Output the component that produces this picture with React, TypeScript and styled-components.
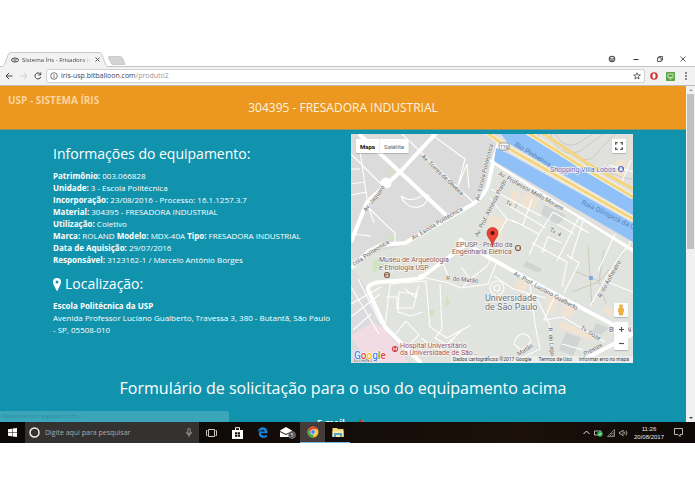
import React from "react";
import styled, { createGlobalStyle, css } from "styled-components";

const GlobalStyle = createGlobalStyle`
  * { box-sizing: border-box; }
  body { margin: 0; background: #fff; font-family: "Open Sans", sans-serif; }
  button, input { font-family: inherit; }
  svg { flex: none; }
`;

const Desktop = styled.div`
  display: flex;
  flex-direction: column;
  height: 100vh;
  padding: 52px 0 51px;
  overflow: hidden;
`;

/* ---------- browser ---------- */

const TabStrip = styled.div`
  display: flex;
  align-items: flex-end;
  height: 15px;
  flex: none;
  border-bottom: 1px solid #c4c4c4;
`;

const TabShape = styled.svg`
  position: absolute;
  inset: 0;
  width: 100%;
  height: 100%;
`;

const Tab = styled.div`
  position: relative;
  display: flex;
  align-items: center;
  gap: 3px;
  width: 106px;
  height: 15px;
  margin: 0 0 -1px 2px;
  padding: 0 8px 0 9px;
  color: #444;
`;

const TabIcon = styled.svg`
  position: relative;
`;

const TabTitle = styled.span`
  position: relative;
  flex: 1;
  font-size: 6px;
  line-height: 12px;
  white-space: nowrap;
  overflow: hidden;
  mask-image: linear-gradient(90deg, #000 85%, transparent);
`;

const IconButton = styled.button<{ $w?: number }>`
  position: relative;
  display: flex;
  align-items: center;
  justify-content: center;
  flex: none;
  width: ${(p) => p.$w ?? 12}px;
  height: 12px;
  padding: 0;
  border: 0;
  background: none;
  color: #555;
`;

const WindowButtons = styled.div`
  display: flex;
  align-items: center;
  gap: 12px;
  margin-left: auto;
  padding: 0 7px 1px 0;
`;

const Toolbar = styled.div`
  display: flex;
  align-items: center;
  height: 19px;
  flex: none;
  padding: 0 3px;
  gap: 3px;
  background: #f2f2f2;
  border-bottom: 1px solid #c0bdb6;
`;

const AddressBar = styled.div`
  display: flex;
  align-items: center;
  flex: 1;
  height: 14px;
  gap: 3px;
  padding: 0 1px 0 3px;
  background: #fff;
  border: 1px solid #d0d0d0;
  border-radius: 2px;
`;

const Address = styled.div`
  flex: 1;
  font-size: 7px;
  line-height: 12px;
  color: #444;
  span { color: #999; }
`;

/* ---------- page ---------- */

const Viewport = styled.div`
  position: relative;
  display: flex;
  flex: 1;
  min-height: 0;
  overflow: hidden;
`;

const Page = styled.div`
  flex: 1;
  min-width: 0;
  background: #1193ad;
  color: #fff;
`;

const Header = styled.header`
  display: grid;
  grid-template-columns: 1fr auto 1fr;
  align-items: center;
  height: 44px;
  padding: 0 8px;
  background: #ec9720;
  border-bottom: 1px solid #8f9560;
`;

const Brand = styled.a`
  align-self: start;
  padding-top: 7px;
  font-size: 10px;
  line-height: 14px;
  font-weight: 700;
  color: #fbd59b;
  text-decoration: none;
  white-space: nowrap;
`;

const ProductTitle = styled.h1`
  margin: 0;
  font-size: 12px;
  line-height: 18px;
  font-weight: 400;
  color: #fff3df;
`;

const Columns = styled.main`
  display: grid;
  grid-template-columns: 1fr 1fr;
  gap: 16px;
  padding: 4px 53px 0;
`;

const Info = styled.section`
  padding-top: 10px;
`;

const Heading = styled.h2`
  display: flex;
  align-items: center;
  gap: 4px;
  margin: 0 0 6px;
  font-size: 14px;
  line-height: 20px;
  font-weight: 400;
`;

const Details = styled.p`
  margin: 0 0 8px;
  font-size: 8px;
  line-height: 12px;
`;

const NoBreak = styled.span`
  white-space: nowrap;
`;

const FormTitle = styled.h2`
  margin: 13px 0 17px;
  font-size: 16px;
  line-height: 24px;
  font-weight: 400;
  text-align: center;
`;

const FieldLabel = styled.div`
  display: flex;
  gap: 14px;
  padding-left: 317px;
  font-size: 9px;
  line-height: 12px;
  font-weight: 700;
  span { color: #e0303a; }
`;

const ScrollTrack = styled.div`
  display: flex;
  flex-direction: column;
  align-items: center;
  width: 9px;
  flex: none;
  background: #f1f1f1;
`;

const ScrollArrow = styled.svg`
  width: 8px;
  height: 8px;
  flex: none;
  &:last-child { margin-top: auto; }
`;

const ScrollThumb = styled.div`
  width: 7px;
  height: 46%;
  background: #c1c1c1;
`;

const StatusBubble = styled.div`
  position: absolute;
  left: 0;
  bottom: 0;
  width: 33%;
  height: 11px;
  padding-left: 2px;
  font-size: 6px;
  line-height: 10px;
  color: #2a8ea3;
  background: #3ba5b9;
  border-radius: 0 2px 0 0;
`;

/* ---------- map ---------- */

const MapFrame = styled.section`
  position: relative;
  aspect-ratio: 282 / 229;
  overflow: hidden;
  font-family: Roboto, sans-serif;
  background: #dfe0dd;
`;

const MapCanvas = styled.svg`
  display: block;
  width: 100%;
  height: 100%;
`;

const floating = css`
  position: absolute;
  display: flex;
  background: #fff;
  border-radius: 1px;
  box-shadow: 0 1px 1px rgba(0, 0, 0, 0.2);
`;

const MapTypes = styled.div`
  ${floating}
  left: 5px;
  top: 5px;
  height: 14px;
`;

const MapType = styled.button<{ $active?: boolean }>`
  padding: 0 4px;
  border: 0;
  border-right: 1px solid #eee;
  background: none;
  font-size: 6px;
  font-weight: ${(p) => (p.$active ? 700 : 400)};
  color: ${(p) => (p.$active ? "#111" : "#666")};
`;

const MapButton = styled.button`
  ${floating}
  right: 5px;
  align-items: center;
  justify-content: center;
  width: 14px;
  height: 14px;
  padding: 0;
  border: 0;
`;

const Fullscreen = styled(MapButton)`
  right: 7px;
  top: 5px;
`;
const Pegman = styled(MapButton)`bottom: 46px;`;
const ZoomIn = styled(MapButton)`bottom: 27px;`;
const ZoomOut = styled(MapButton)`bottom: 13px;`;

const Attribution = styled.div`
  position: absolute;
  right: 0;
  bottom: 0;
  display: flex;
  gap: 7px;
  padding: 0 4px 0 2px;
  font-size: 5px;
  line-height: 7px;
  color: #444;
  background: rgba(240, 240, 240, 0.75);
  white-space: nowrap;
  a { color: inherit; text-decoration: none; }
`;

/* ---------- taskbar ---------- */

const Taskbar = styled.footer`
  display: flex;
  align-items: stretch;
  height: 21px;
  flex: none;
  background: linear-gradient(90deg, #0c0807, #150d08 55%, #1b110a 75%, #0d0807);
`;

const TaskButton = styled.button<{ $w?: number; $open?: boolean; $active?: boolean }>`
  display: flex;
  align-items: center;
  justify-content: center;
  width: ${(p) => p.$w ?? 25}px;
  padding: 0;
  border: 0;
  border-bottom: ${(p) => (p.$open ? "1px solid #76b9ed" : "0")};
  background: ${(p) => (p.$active ? "#453c39" : "none")};
`;

const Search = styled.label`
  display: flex;
  align-items: center;
  gap: 5px;
  width: 174px;
  padding: 0 7px 0 4px;
  background: #343231;
`;

const SearchInput = styled.input`
  flex: 1;
  min-width: 0;
  padding: 0;
  border: 0;
  outline: 0;
  background: none;
  font-size: 7px;
  color: #aaa;
  &::placeholder { color: #aaa; opacity: 1; }
`;

const Tray = styled.div`
  display: flex;
  align-items: center;
  gap: 4px;
  margin-left: auto;
  padding-right: 12px;
`;

const Clock = styled.time`
  width: 34px;
  margin-right: 4px;
  font-size: 6px;
  line-height: 8px;
  text-align: center;
  color: #e8e8e8;
  font-family: "Liberation Sans", sans-serif;
`;

const details: [string, string][][] = [
  [["Patrimônio:", "003.066828"]],
  [["Unidade:", "3 - Escola Politécnica"]],
  [["Incorporação:", "23/08/2016 - Processo: 16.1.1257.3.7"]],
  [["Material:", "304395 - FRESADORA INDUSTRIAL"]],
  [["Utilização:", "Coletivo"]],
  [["Marca:", "ROLAND"], ["Modelo:", "MDX-40A"], ["Tipo:", "FRESADORA INDUSTRIAL"]],
  [["Data de Aquisição:", "29/07/2016"]],
  [["Responsável:", "3123162-1 / Marcelo Antônio Borges"]],
];

const streets: [string, number, number, number][] = [
  ["Av. Jaguaré", 15, 78, -52],
  ["Av. Torres de Oliveira", 70, 23, 44],
  ["Av. Escola Politécnica", 62, 106, -31],
  ["Av. Escola Politécnica", 128, 67, -76],
  ["cola Politécnica", 3, 132, -33],
  ["Av. Prof. Almeida Prado", 127, 103, -63],
  ["Av. Professor Mello Moraes", 147, 41, 29],
  ["Tv. 1", 154, 70, 24],
  ["Tv. 4", 198, 97, 28],
  ["R. do Matão", 95, 146, 5],
  ["Av. Prof. Luciano Gualberto", 162, 141, 29],
  ["R. do Anfiteatro", 250, 164, -61],
  ["Tv. Doze", 229, 195, 31],
  ["R. do Lago", 197, 194, 84],
  ["Prestes", 234, 222, -29],
  ["Matão", 168, 222, -33],
];

const Map = () => (
  <MapFrame aria-label="Mapa">
    <MapCanvas viewBox="0 0 282 229" preserveAspectRatio="xMidYMid slice">
      <rect width="282" height="229" fill="#e1e3de" />
      <path d="M0 0H149L138 52 118 73 54 111 0 125Z" fill="#dbdbdb" />
      <path d="M0 133 16 154 34 193 60 229H0Z" fill="#dcdcdf" />
      <path d="M0 202 22 188 34 195 58 229H18Z" fill="#f1dce3" />
      <path d="M149 0H282V112L139 27Z" fill="#e0e0dd" />
      <path d="M33 36 40 30 48 40 40 46Z M112 35 118 27 113 53Z" fill="#d9dcd0" />
      <g fill="#cfe3bf">
        <path d="M23 126 38 122 32 134 22 138Z M78 176H83V182H78Z M96 161 99 170 94 172Z M36 101 48 103 42 107Z" />
      </g>
      <g fill="#f1e3d1">
        <path d="M163 55 170 59 163 73 157 69Z M173 59 188 64 183 76 168 72Z M137 80 154 85 150 108 138 102Z M166 145 177 150 173 158 163 153Z M198 161 208 167 201 181 194 177Z M213 170 225 176 218 184 210 181Z M210 187 244 202 240 207 207 193Z M266 25 278 27 270 47 262 41Z M255 172 267 177 263 183 252 178Z" />
      </g>
      <path d="M193 71 215 81 207 91 190 80Z M175 127 191 135 188 139 172 132Z M215 198 230 204 222 222 208 216Z M245 189 258 194 250 201 241 198Z" fill="#d2d4d4" />
      <g fill="none" stroke="#c8cac8" strokeWidth="1">
        <path d="M187 0C194 18 211 20 214 27C225 37 236 27 246 36C259 37 267 44 282 45M205 0C210 12 222 14 230 7L242 0M200 0C204 20 222 23 232 15L252 0M222 17C228 28 240 28 245 20L264 0" />
      </g>
      <g fill="none" stroke="#bfc2a8" strokeWidth=".7">
        <path d="M223 137 248 147 273 119M237 113 241 170M253 116 248 147 255 170M221 158 247 148" />
      </g>
      <g fill="none" stroke="#fff" strokeWidth="1.1">
        <path d="M0 20 30 50M8 10 16 65M0 35H9M0 50 14 48M0 61 16 58M51 0 122 68M80 0 114 25 107 52 116 30 118 54M50 62C66 73 72 55 78 62C72 80 54 74 50 62M16 72 30 86 44 99V109M16 68 23 89M0 100 20 102" />
        <path d="M0 170 30 153M0 183 29 160M7 145 30 190M0 153 28 200M20 180 2 196M39 150 34 193M39 150 75 147 79 193 96 204 120 191M35 163H46V174H62L66 160 48 158 47 178 60 182 72 178M54 155 64 163 68 152M43 202 55 187 68 201 56 213ZM70 204 89 217 110 197M89 150 91 195 84 204 98 212M99 205 120 229M71 143 98 149 110 154 137 150 145 130M112 153C121 140 139 135 139 125M110 133 119 145M92 130 99 146" />
        <path d="M139 64 156 85 137 118M156 85 172 91 181 65M155 70 195 94M161 86 188 100 178 121M188 100 202 78M202 78 238 99M228 83 206 127M206 90 223 100M181 109 216 128 211 153M191 119 197 103 211 109M220 125 232 87M239 90 282 118M264 100 247 137M140 55 190 82M216 121 228 129 213 159M239 172 262 132 281 106M259 149 282 158M205 160 193 186 212 183 254 208M175 160 185 163 198 189 203 229M163 210C166 196 179 198 180 208L170 216ZM179 150 184 190 189 215 160 229M143 142 162 155 195 164M258 31 282 38M270 50 280 26M211 210 232 216" />
        <circle cx="146" cy="154" r="7" />
        <circle cx="146" cy="154" r="3" />
      </g>
      <g fill="none" stroke="#fff" strokeWidth="4" strokeLinejoin="round">
        <path d="M88-4 49 38 16 68 0 108M8 0 49 38 97 83" />
        <path d="M0 134 18 117 30 111 54 109 122 70Q136 60 138 47L142 28 148 8" />
        <path d="M114 111 71 143 66 145 31 148Q16 149 17 156L34 193 70 229M108 105 139 124 206 161 259 189 282 200 226 229" />
      </g>
      <circle cx="35" cy="49" r="5.5" fill="#fff" />
      <circle cx="70" cy="143" r="3" fill="#fff" />
      <path d="M150 0H174L282 65V81L157 9ZM145 14 143 27 282 108V89L158 20Z" fill="#8fc0f7" />
      <path d="M138 26 212 73 282 116" fill="none" stroke="#fff" strokeWidth="2.5" />
      <g fill="none" strokeLinejoin="round">
        <path d="M131-5 157 14 282 85M176-2 225 29 282 63" stroke="#f5f3e8" strokeWidth="5" />
        <path d="M131-5 157 14 282 85M176-2 225 29 282 63M190-2 239 31 282 55" stroke="#f5d57c" strokeWidth="3" />
      </g>
      <rect x="148" y="9" width="10" height="7" rx="2" fill="#fff" stroke="#777" strokeWidth=".7" />
      <g fontSize="5" fill="#555" fontFamily="Roboto, sans-serif">
        <text x="149" y="15">116</text>
      </g>
      <g fontSize="6" fill="#666" stroke="#f4f4f2" strokeWidth="1" paintOrder="stroke" fontFamily="Roboto, sans-serif">
        {streets.map(([name, x, y, angle], i) => (
          <text key={i} x={x} y={y} transform={`rotate(${angle} ${x} ${y})`}>{name}</text>
        ))}
      </g>
      <g fontSize="7" fill="#5587b8" fontFamily="Roboto, sans-serif">
        <text x="163" y="12" transform="rotate(31 163 12)">Rio Pinheiros</text>
        <text x="230" y="70" transform="rotate(26 230 70)">Raia Olímpica da US</text>
      </g>
      <g fontSize="7" stroke="#f7f7f5" strokeWidth="1.4" paintOrder="stroke" fontFamily="Roboto, sans-serif">
        <text x="199" y="38" fill="#5868b8">Shopping Villa Lobos</text>
        <g fill="#8a5b50">
          <text x="105" y="113">EPUSP - Prédio da</text>
          <text x="101" y="120">Engenharia Elétrica</text>
          <text x="28" y="128">Museu de Arqueologia</text>
          <text x="28" y="136">e Etnologia USP</text>
          <text x="258" y="198">BUTAN</text>
        </g>
        <g fill="#a4525a">
          <text x="49" y="214">Hospital Universitário</text>
          <text x="49" y="221">da Universidade de São…</text>
        </g>
        <g fontSize="9" fill="#6c7074">
          <text x="134" y="167">Universidade</text>
          <text x="134" y="176">de São Paulo</text>
        </g>
      </g>
      <circle cx="270" cy="35" r="3" fill="#5868c0" />
      <path d="M268.7 34.5H271.3V36.5H268.7ZM269.3 34V33.3H270.7V34" fill="#fff" stroke="#fff" strokeWidth=".4" />
      <g fill="#e9dccf" stroke="#86604f" strokeWidth="1.2">
        <circle cx="167" cy="114" r="2.5" />
        <circle cx="36" cy="141" r="2.5" />
      </g>
      <path d="M34.8 142V140.5H37.2V142" fill="none" stroke="#86604f" strokeWidth=".7" />
      <circle cx="44" cy="215" r="3" fill="#d3393f" />
      <path d="M42.7 213.5V216.5M45.3 213.5V216.5M42.7 215H45.3" stroke="#fff" strokeWidth=".8" />
      <rect x="238" y="142" width="4" height="4" rx="1" fill="#7ca8e8" />
      <path d="M141.500 113C141 106 136 104 136 99A5.500 5.500 0 0 1 147 99C147 104 142 106 141.500 113Z" fill="#ea4335" stroke="#b3271d" strokeWidth=".6" />
      <circle cx="141.500" cy="99" r="2" fill="#5c100c" />
      <g fontSize="6" fill="#777" fontFamily="Roboto, sans-serif">
        <text x="3" y="228">UTANTÃ</text>
      </g>
      <text x="3" y="225" fontSize="10" fontFamily="Roboto, sans-serif" fontWeight="500" stroke="#fff" strokeWidth="1.2" paintOrder="stroke">
        <tspan fill="#4285f4">G</tspan><tspan fill="#ea4335">o</tspan><tspan fill="#fbbc05">o</tspan><tspan fill="#4285f4">g</tspan><tspan fill="#34a853">l</tspan><tspan fill="#ea4335">e</tspan>
      </text>
    </MapCanvas>
    <MapTypes>
      <MapType $active>Mapa</MapType>
      <MapType>Satélite</MapType>
    </MapTypes>
    <Fullscreen aria-label="Tela cheia">
      <svg width="8" height="8" viewBox="0 0 8 8" fill="none" stroke="#555" strokeWidth="1.3">
        <path d="M.7 2.700V.7H2.700M5.300.7H7.300V2.700M7.300 5.300V7.300H5.300M2.700 7.300H.7V5.300" />
      </svg>
    </Fullscreen>
    <Pegman aria-label="Street View">
      <svg width="8" height="12" viewBox="0 0 8 12" fill="#f0b13a">
        <circle cx="4" cy="2.200" r="2" />
        <path d="M1.500 4.500H6.500V8H5.800V11H2.200V8H1.500Z" stroke="#d3922a" strokeWidth=".5" />
      </svg>
    </Pegman>
    <ZoomIn aria-label="Aumentar zoom">
      <svg width="7" height="7" viewBox="0 0 7 7" stroke="#555" strokeWidth="1.200"><path d="M1 3.500H6M3.500 1V6" /></svg>
    </ZoomIn>
    <ZoomOut aria-label="Diminuir zoom">
      <svg width="7" height="7" viewBox="0 0 7 7" stroke="#555" strokeWidth="1.200"><path d="M1 3.500H6" /></svg>
    </ZoomOut>
    <Attribution>
      <span>Dados cartográficos ©2017 Google</span>
      <a href="#termos">Termos de Uso</a>
      <a href="#erro">Informar erro no mapa</a>
    </Attribution>
  </MapFrame>
);

const Browser = () => (
  <>
    <TabStrip>
      <Tab>
        <TabShape viewBox="0 0 106 15" preserveAspectRatio="none">
          <path d="M0 15Q2 14 3 11L6 3Q7 .5 9 .5H97Q99 .5 100 3L103 11Q104 14 106 15Z" fill="#f2f2f2" stroke="#bbb" strokeWidth=".8" />
          <path d="M1 15H105" stroke="#f2f2f2" strokeWidth="2" />
        </TabShape>
        <TabIcon width="8" height="8" viewBox="0 0 8 8" fill="none" stroke="#444">
          <ellipse cx="4" cy="4" rx="3.500" ry="2" />
          <path d="M2.500 3.500Q4 5.300 5.500 3.500" />
        </TabIcon>
        <TabTitle>Sistema Íris - Frisadora In</TabTitle>
        <IconButton $w={6} aria-label="Fechar guia">
          <svg width="5" height="5" viewBox="0 0 5 5" stroke="currentColor"><path d="M.5.5 4.500 4.500M4.500.5.5 4.500" /></svg>
        </IconButton>
      </Tab>
      <IconButton $w={18} aria-label="Nova guia">
        <svg width="18" height="9" viewBox="0 0 18 9"><path d="M1 .5H12Q14 .5 15 3L17 8.500H5Q3.500 8.500 3 7L.5 2Q0 .5 1 .5Z" fill="#d4d4d4" stroke="#bbb" strokeWidth=".6" /></svg>
      </IconButton>
      <WindowButtons>
        <IconButton aria-label="Perfil">
          <svg width="8" height="8" viewBox="0 0 8 8"><circle cx="4" cy="4" r="3.300" fill="#555" /><path d="M2.500 2H5.500V3.400H2.500ZM1.600 4.400H6.400V5.200H1.600Z" fill="#eee" /></svg>
        </IconButton>
        <IconButton aria-label="Minimizar">
          <svg width="6" height="6" viewBox="0 0 6 6" stroke="#333"><path d="M.5 3.500H5.500" /></svg>
        </IconButton>
        <IconButton aria-label="Restaurar">
          <svg width="6" height="6" viewBox="0 0 6 6" fill="none" stroke="#333" strokeWidth=".8"><path d="M.5 1.800H4.200V5.500H.5ZM1.800 1.800V.5H5.500V4.200H4.200" /></svg>
        </IconButton>
        <IconButton $w={10} aria-label="Fechar">
          <svg width="6" height="6" viewBox="0 0 6 6" stroke="#333" strokeWidth=".8"><path d="M.5.5 5.500 5.500M5.500.5.5 5.500" /></svg>
        </IconButton>
      </WindowButtons>
    </TabStrip>
    <Toolbar>
      <IconButton aria-label="Voltar">
        <svg width="8" height="8" viewBox="0 0 8 8" fill="none" stroke="#444"><path d="M7.500 4H1M4 1 1 4 4 7" /></svg>
      </IconButton>
      <IconButton $w={11} aria-label="Avançar">
        <svg width="8" height="8" viewBox="0 0 8 8" fill="none" stroke="#ccc"><path d="M.5 4H7M4 1 7 4 4 7" /></svg>
      </IconButton>
      <IconButton $w={11} aria-label="Recarregar">
        <svg width="8" height="8" viewBox="0 0 8 8" fill="none" stroke="#444"><path d="M6.800 5A3 3 0 1 1 6.300 2M6.800.5V3H4.300" /></svg>
      </IconButton>
      <AddressBar>
        <svg width="8" height="8" viewBox="0 0 8 8" fill="none" stroke="#555" strokeWidth=".8"><circle cx="4" cy="4" r="3.300" /><path d="M4 3.500V6M4 2V2.800" /></svg>
        <Address>iris-usp.bitballoon.com<span>/produto2</span></Address>
        <IconButton aria-label="Favorito">
          <svg width="8" height="8" viewBox="0 0 8 8" fill="none" stroke="#444" strokeWidth=".8"><path d="M4 .8 4.900 3H7.400L5.400 4.600 6.100 7 4 5.600 1.900 7 2.600 4.600.6 3H3.100Z" /></svg>
        </IconButton>
      </AddressBar>
      <IconButton aria-label="Opera">
        <svg width="8" height="8" viewBox="0 0 8 8"><circle cx="4" cy="4" r="3.800" fill="#d33131" /><ellipse cx="4" cy="4" rx="1.600" ry="2.800" fill="#fff" /></svg>
      </IconButton>
      <IconButton $w={14} aria-label="Extensão">
        <svg width="9" height="9" viewBox="0 0 9 9"><rect width="9" height="9" rx="1" fill="#5aa544" /><path d="M2 2H7V5.500H2ZM3.500 7H5.500M4.500 5.500V7" fill="none" stroke="#dff0d8" strokeWidth=".8" /></svg>
      </IconButton>
      <IconButton aria-label="Menu">
        <svg width="4" height="8" viewBox="0 0 4 8" fill="#555"><circle cx="2" cy="1" r=".9" /><circle cx="2" cy="4" r=".9" /><circle cx="2" cy="7" r=".9" /></svg>
      </IconButton>
    </Toolbar>
  </>
);

const TaskbarItems = () => (
  <Taskbar>
    <TaskButton aria-label="Iniciar">
      <svg width="9" height="9" viewBox="0 0 9 9" fill="#fff"><path d="M0 1.300 4 .7V4.200H0ZM4.500.6 9 0V4.200H4.500ZM0 4.700H4V8.300L0 7.700ZM4.500 4.700H9V9L4.500 8.400Z" /></svg>
    </TaskButton>
    <Search>
      <svg width="11" height="11" viewBox="0 0 11 11" fill="none" stroke="#f2f2f2" strokeWidth="1.500"><circle cx="5.500" cy="5.500" r="4.500" /></svg>
      <SearchInput placeholder="Digite aqui para pesquisar" aria-label="Pesquisar" />
      <svg width="6" height="9" viewBox="0 0 6 9" fill="none" stroke="#aaa" strokeWidth=".8"><rect x="1.800" y=".5" width="2.400" height="5" rx="1.200" /><path d="M.5 4Q.5 6.700 3 6.700T5.500 4M3 6.700V9" /></svg>
    </Search>
    <TaskButton aria-label="Visão de tarefas">
      <svg width="11" height="8" viewBox="0 0 11 8" fill="none" stroke="#ddd" strokeWidth=".9"><path d="M2.500.5H8.500V7.500H2.500ZM1.500 1.500H.5V6.500H1.500M9.500 1.500H10.500V6.500H9.500" /></svg>
    </TaskButton>
    <TaskButton aria-label="Loja" $w={26}>
      <svg width="11" height="12" viewBox="0 0 11 12"><path d="M0 3H11V12H0Z" fill="#fff" /><path d="M3.500 4V.7H7.500V4" fill="none" stroke="#fff" /><path d="M3 5.200H5.200V7.200H3ZM5.800 5.200H8V7.200H5.800ZM3 7.800H5.200V9.800H3ZM5.800 7.800H8V9.800H5.800Z" fill="#1a1210" /></svg>
    </TaskButton>
    <TaskButton aria-label="Edge">
      <svg width="11" height="11" viewBox="0 0 11 11"><path d="M.5 5Q1.500.2 6 .2Q10.700.5 10.600 6.300H4Q4.200 8.600 7 8.700Q8.700 8.700 10 7.900V10.100Q8.500 11 6.300 10.900Q2 10.700 1.800 6.800Q1.900 4.300 4.300 3Q1.800 3.200.5 5ZM4 4.600H7.700Q7.600 2.800 6 2.700Q4.400 2.900 4 4.600Z" fill="#1683d8" fillRule="evenodd" /></svg>
    </TaskButton>
    <TaskButton aria-label="Email">
      <svg width="16" height="13" viewBox="0 0 16 13"><path d="M0 4.500 6 1 12 4.500V11H0Z" fill="#fff" /><path d="M0 5.500 6 8.500 12 5.500" fill="none" stroke="#1a1210" /><circle cx="12" cy="9" r="3.500" fill="#504c4a" stroke="#999" strokeWidth=".6" /><text x="10.500" y="11" fontSize="5" fill="#fff">5</text></svg>
    </TaskButton>
    <TaskButton aria-label="Chrome" $open $active>
      <svg width="12" height="12" viewBox="0 0 12 12"><circle cx="6" cy="6" r="5.500" fill="#f7c928" /><path d="M1.200 3.300A5.500 5.500 0 0 1 10.800 3.300H6L3.700 7.300Z" fill="#e04a3b" /><path d="M1.200 3.300 3.700 7.300 6 8.500 7 8.200 5.500 11.500A5.500 5.500 0 0 1 1.200 3.300Z" fill="#3fa558" /><circle cx="6" cy="6" r="2.600" fill="#fff" /><circle cx="6" cy="6" r="2" fill="#4a86e8" /></svg>
    </TaskButton>
    <TaskButton aria-label="Explorador de Arquivos" $open>
      <svg width="12" height="11" viewBox="0 0 12 11"><path d="M.5 1H5L6 2H11.500V10H.5Z" fill="#f6d978" /><path d="M.5 4H11.500V10H.5Z" fill="#fbe9a4" /><path d="M2 10V6H10V10H8V8H4V10Z" fill="#4fa7cf" /></svg>
    </TaskButton>
    <Tray>
      <svg width="7" height="5" viewBox="0 0 7 5" fill="none" stroke="#ddd"><path d="M.5 4 3.500 1 6.500 4" /></svg>
      <svg width="9" height="8" viewBox="0 0 9 8"><path d="M.5 2H7V6H.5ZM7.500 3.300V4.700" fill="none" stroke="#ddd" strokeWidth=".8" /><circle cx="6" cy="5" r="2.700" fill="#35b557" /><path d="M4.800 5 5.700 6 7.200 4" fill="none" stroke="#fff" strokeWidth=".7" /></svg>
      <svg width="8" height="8" viewBox="0 0 8 8" fill="none" stroke="#999" strokeWidth=".8"><path d="M.5 7.500 7.500.5V7.500ZM3 7.500Q3.500 4.500 7.500 3.500M5 7.500Q5.500 6 7.500 5.500" /></svg>
      <svg width="9" height="8" viewBox="0 0 9 8" fill="none" stroke="#bbb" strokeWidth=".8"><path d="M.5 3H2L4 1V7L2 5H.5ZM5.500 2.800Q6.300 4 5.500 5.200M7 1.500Q8.800 4 7 6.500" /></svg>
      <Clock>11:26<br />20/08/2017</Clock>
      <svg width="9" height="9" viewBox="0 0 9 9" fill="none" stroke="#ccc" strokeWidth=".9"><path d="M.5.5H8.500V6.500H6V8.500L4 6.500H.5Z" /></svg>
    </Tray>
  </Taskbar>
);

export default function App() {
  return (
    <>
      <GlobalStyle />
      <Desktop>
        <Browser />
        <Viewport>
          <Page>
            <Header>
              <Brand href="#inicio">USP - SISTEMA ÍRIS</Brand>
              <ProductTitle>304395 - FRESADORA INDUSTRIAL</ProductTitle>
            </Header>
            <Columns>
              <Info>
                <Heading>Informações do equipamento:</Heading>
                <Details>
                  {details.map((line, i) => (
                    <React.Fragment key={i}>
                      {line.map(([label, value]) => (
                        <React.Fragment key={label}><b>{label}</b> {value} </React.Fragment>
                      ))}
                      <br />
                    </React.Fragment>
                  ))}
                </Details>
                <Heading>
                  <svg width="8" height="13" viewBox="0 0 8 13" fill="#fff"><path fillRule="evenodd" d="M4 0A4 4 0 0 1 8 4Q8 5.500 7.200 7L4.500 12.500Q4 13.300 3.500 12.500L.8 7Q0 5.500 0 4A4 4 0 0 1 4 0ZM4 2.500A1.500 1.500 0 1 0 4 5.500 1.500 1.500 0 0 0 4 2.500Z" /></svg>
                  Localização:
                </Heading>
                <Details>
                  <b>Escola Politécnica da USP</b><br />
                  Avenida Professor Luciano Gualberto, Travessa 3, 380 - Butantã, São Paulo <NoBreak>- SP, 05508-010</NoBreak>
                </Details>
              </Info>
              <Map />
            </Columns>
            <FormTitle>Formulário de solicitação para o uso do equipamento acima</FormTitle>
            <FieldLabel>E-mail <span>*</span></FieldLabel>
          </Page>
          <ScrollTrack>
            <ScrollArrow viewBox="0 0 8 8" fill="#999"><path d="M2 5 4 3 6 5Z" /></ScrollArrow>
            <ScrollThumb />
            <ScrollArrow viewBox="0 0 8 8" fill="#444"><path d="M2 3 4 5 6 3Z" /></ScrollArrow>
          </ScrollTrack>
          <StatusBubble>Aguardando cs-gstatic.com...</StatusBubble>
        </Viewport>
        <TaskbarItems />
      </Desktop>
    </>
  );
}
